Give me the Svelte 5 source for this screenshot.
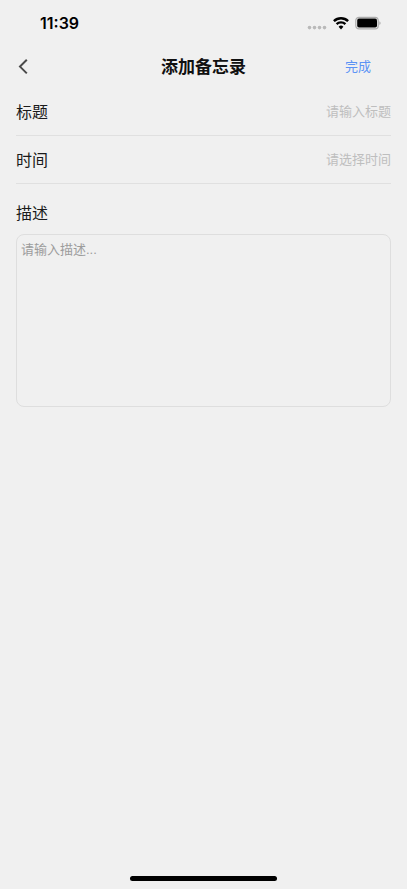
<script>
	let title = $state("");
	let time = $state("");
	let description = $state("");
</script>

<div class="page">
	<div class="status-bar">
		<span class="clock">11:39</span>
		<div class="status-icons">
			<svg width="20" height="14" viewBox="0 0 20 14" fill="#b9b9b9">
				<circle cx="2.5" cy="11.6" r="1.8" />
				<circle cx="7.5" cy="11.6" r="1.8" />
				<circle cx="12.5" cy="11.6" r="1.8" />
				<circle cx="17.5" cy="11.6" r="1.8" />
			</svg>
			<svg width="16" height="14" viewBox="0 0 16 14" fill="none" stroke="#000" stroke-width="2.4">
				<path d="M0.9 5.2a10 10 0 0 1 14.2 0" />
				<path d="M3.6 8.2a6.2 6.2 0 0 1 8.8 0" />
				<path d="M8 13.4l-2.4-2.6a3.4 3.4 0 0 1 4.8 0z" fill="#000" stroke="none" />
			</svg>
			<svg width="26" height="14" viewBox="0 0 26 14">
				<rect x="0.8" y="1.3" width="22.4" height="11.6" rx="3.2" fill="none" stroke="#ababab" stroke-width="1.2" />
				<rect x="2.2" y="2.6" width="19.8" height="9" rx="1.8" fill="#000" />
				<path d="M24.4 5.2c1.6.6 1.6 3.2 0 3.8z" fill="#ababab" />
			</svg>
		</div>
	</div>

	<header>
		<button class="back" type="button" aria-label="返回">
			<svg width="10" height="16" viewBox="0 0 10 16" fill="none" stroke="#4a4a4a" stroke-width="2">
				<path d="M8.8 0.8L2 7.6l6.8 6.8" />
			</svg>
		</button>
		<h1>添加备忘录</h1>
		<button class="done" type="submit" form="memo">完成</button>
	</header>

	<form id="memo" onsubmit={(e) => e.preventDefault()}>
		<div class="row">
			<label for="title">标题</label>
			<input id="title" type="text" placeholder="请输入标题" bind:value={title}>
		</div>
		<div class="row">
			<label for="time">时间</label>
			<input id="time" type="text" placeholder="请选择时间" bind:value={time}>
		</div>
		<div class="description">
			<label for="description">描述</label>
			<textarea id="description" placeholder="请输入描述..." bind:value={description}></textarea>
		</div>
	</form>

	<div class="home-indicator"></div>
</div>

<style>
	:global(body) {
		background: #f0f0f0;
	}

	.page {
		display: flex;
		flex-direction: column;
		box-sizing: border-box;
		min-height: 100vh;
		padding-bottom: 8px;
		background: #f0f0f0;
		color: #1a1a1a;
		font-family: "Liberation Sans", "Noto Sans CJK SC", sans-serif;
	}

	.status-bar {
		display: flex;
		align-items: center;
		justify-content: space-between;
		height: 46px;
		padding: 0 26px 0 40px;
	}

	.clock {
		color: #000;
		font-family: Inter, sans-serif;
		font-size: 16px;
		font-weight: 600;
	}

	.status-icons {
		display: flex;
		align-items: center;
		gap: 6px;
	}

	header {
		display: grid;
		grid-template-columns: 1fr auto 1fr;
		align-items: center;
		height: 42px;
		padding: 0 16px;
	}

	h1 {
		margin: 0;
		padding-top: 2px;
		color: #111;
		font-size: 17px;
		font-weight: 700;
		line-height: 24px;
	}

	button {
		padding: 0;
		border: none;
		background: none;
		font-family: inherit;
		cursor: pointer;
	}

	.back {
		display: flex;
		justify-self: start;
		padding: 4px 2px;
	}

	.done {
		justify-self: end;
		padding: 0 20px;
		color: #5b93f5;
		font-size: 13px;
		line-height: 24px;
	}

	form {
		flex: 1;
		padding: 0 16px;
	}

	.row {
		display: flex;
		align-items: center;
		height: 47px;
		border-bottom: 1px solid #e0e0e0;
	}

	label {
		padding-top: 2px;
		font-size: 16px;
		line-height: 24px;
	}

	input,
	textarea {
		box-sizing: border-box;
		outline: none;
		background: transparent;
		color: #1a1a1a;
		font-family: inherit;
		font-size: 13px;
	}

	input {
		flex: 1;
		min-width: 0;
		height: 24px;
		padding: 0;
		border: none;
		text-align: right;
	}

	input::placeholder {
		color: #bebebe;
		opacity: 1;
	}

	.description {
		padding-top: 16px;
	}

	.description label {
		display: block;
	}

	textarea {
		display: block;
		width: 100%;
		height: 173px;
		margin-top: 8px;
		padding: 5px 4px;
		border: 1px solid #dedede;
		border-radius: 8px;
		line-height: 20px;
		resize: none;
	}

	textarea::placeholder {
		color: #9c9c9c;
		opacity: 1;
	}

	.home-indicator {
		width: 36%;
		height: 5px;
		margin: 0 auto;
		border-radius: 3px;
		background: #000;
	}
</style>
